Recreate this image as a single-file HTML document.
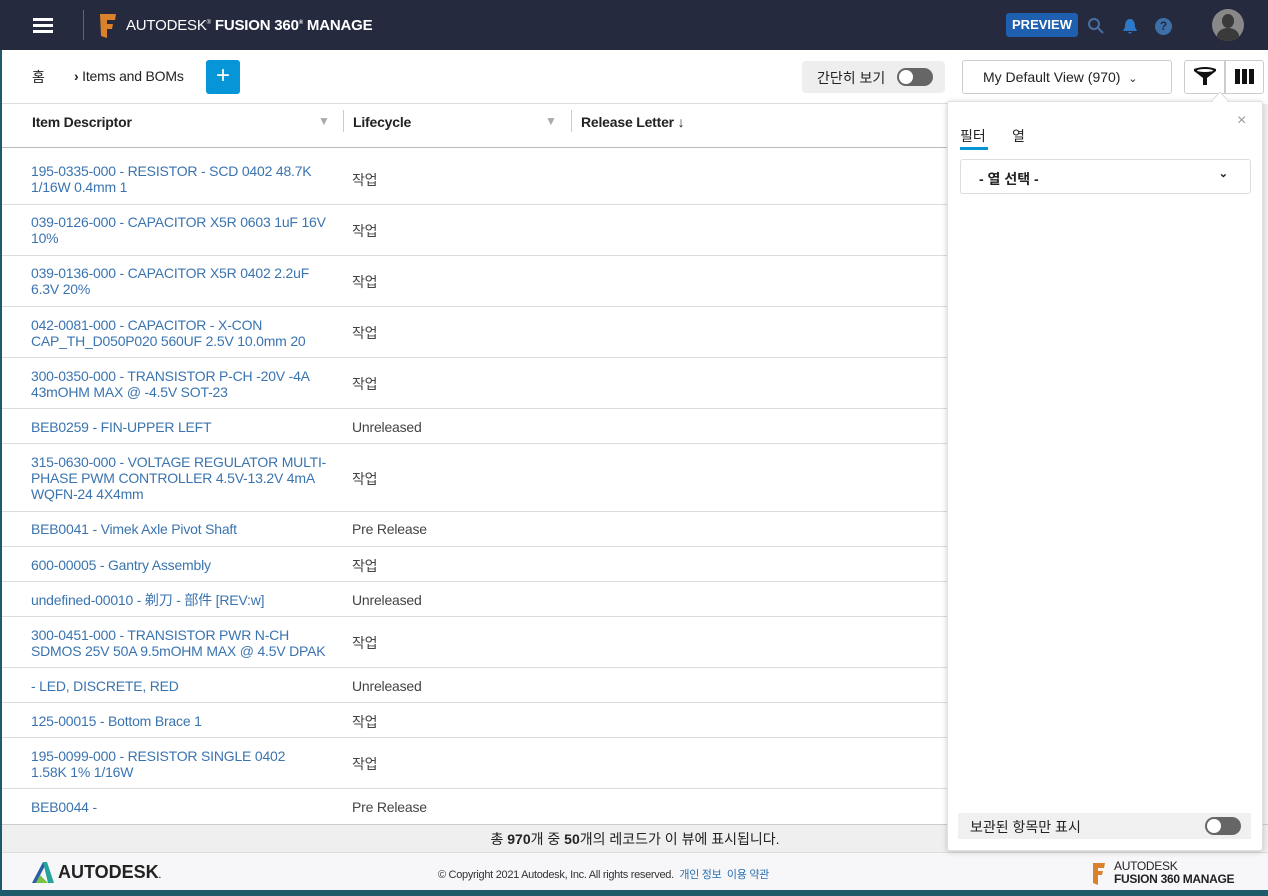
<!DOCTYPE html>
<html><head><meta charset="utf-8"><style>
*{box-sizing:border-box;margin:0;padding:0}
body{width:1268px;height:896px;overflow:hidden;font-family:"Liberation Sans","Noto Sans CJK KR",sans-serif;background:#fff;position:relative;color:#3c3c3c}
.top{position:absolute;left:0;top:0;width:1268px;height:50px;background:#252a3f}
.abs{position:absolute}
.row{position:absolute;left:2px;width:945px;border-bottom:1px solid #dcdcdc;font-size:14px;letter-spacing:-.2px}
.row .a{position:absolute;left:29px;width:302px;color:#3a74b0;line-height:16px}
.row .b{position:absolute;left:350px;color:#444}
</style></head><body>
<div class="abs" style="left:0;top:0;width:2px;height:896px;background:#1d5a6a"></div>
<div class="top">
 <div class="abs" style="left:33px;top:18px;width:20px;height:3px;background:#fff;box-shadow:0 6px 0 #fff,0 12px 0 #fff"></div>
 <div class="abs" style="left:83px;top:10px;width:1px;height:30px;background:#666"></div>
 <svg class="abs" style="left:99px;top:12px" width="18" height="27"><path d="M1 2 L17 2 L16 8 L8 8 L8 12 L14 12 L13 17 L8 17 L8 26 L2 24 Z" fill="#d9822b"/></svg>
 <div class="abs" style="left:126px;top:17px;color:#fff;font-size:15px;letter-spacing:-.2px">AUTODESK<sup style="font-size:6px">®</sup> <b>FUSION 360<sup style="font-size:6px">®</sup> MANAGE</b></div>
 <div class="abs" style="left:1006px;top:13px;width:72px;height:24px;background:#1f5fb0;border-radius:3px;color:#fff;font-weight:bold;font-size:13px;text-align:center;line-height:24px">PREVIEW</div>
 <svg class="abs" style="left:1087px;top:17px" width="18" height="18"><circle cx="7" cy="7" r="5" stroke="#4a6fa0" stroke-width="2" fill="none"/><path d="M11 11 L16 16" stroke="#4a6fa0" stroke-width="2"/></svg>
 <svg class="abs" style="left:1122px;top:18px" width="16" height="17"><path d="M8 1 C4 1 3 5 3 9 L1 13 L15 13 L13 9 C13 5 12 1 8 1Z M6 14 L10 14 L8 16Z" fill="#2e78c8"/></svg>
 <div class="abs" style="left:1155px;top:18px;width:17px;height:17px;border-radius:50%;background:#3d6fa8;color:#252a3f;font-size:12px;font-weight:bold;text-align:center;line-height:17px">?</div>
 <div class="abs" style="left:1212px;top:9px;width:32px;height:32px;border-radius:50%;background:#888;overflow:hidden"><div class="abs" style="left:10px;top:5px;width:12px;height:14px;border-radius:50%;background:#3a3a3a"></div><div class="abs" style="left:5px;top:19px;width:22px;height:16px;border-radius:50% 50% 0 0;background:#3a3a3a"></div></div>
</div>
<div class="abs" style="left:32px;top:67px;font-size:14px;color:#222">홈</div>
<div class="abs" style="left:74px;top:68px;font-size:14px;color:#222;letter-spacing:-.2px"><b>›</b> Items and BOMs</div>
<div class="abs" style="left:206px;top:60px;width:34px;height:34px;background:#0696d7;border-radius:3px;color:#fff;font-size:24px;text-align:center;line-height:32px">+</div>
<div class="abs" style="left:802px;top:61px;width:143px;height:32px;background:#eeeeee;border-radius:4px;font-size:14px;color:#222;padding:7px 0 0 15px">간단히 보기</div>
<div class="abs" style="left:897px;top:68px;width:36px;height:18px;border-radius:9px;background:#666"><div class="abs" style="left:2px;top:2px;width:14px;height:14px;border-radius:50%;background:#fff"></div></div>
<div class="abs" style="left:962px;top:60px;width:210px;height:34px;border:1px solid #ccc;border-radius:3px;font-size:14px;color:#222;padding:8px 0 0 20px">My Default View (970) &nbsp;<span style="font-size:11px">⌄</span></div>
<div class="abs" style="left:1184px;top:60px;width:41px;height:34px;border:1px solid #ccc;border-radius:3px 0 0 3px"></div>
<svg class="abs" style="left:1193px;top:67px" width="24" height="20"><path d="M1 2 Q12 -2 23 2 L23 4 L14 11 L14 18 L10 18 L10 11 L1 4Z" fill="#111"/><ellipse cx="12" cy="3.5" rx="8" ry="1.5" fill="#fff"/></svg>
<div class="abs" style="left:1225px;top:60px;width:39px;height:34px;border:1px solid #ccc;border-radius:0 3px 3px 0"></div>
<div class="abs" style="left:1235px;top:69px;width:5px;height:15px;background:#111;box-shadow:7px 0 0 #111,14px 0 0 #111"></div>
<div class="abs" style="left:2px;top:103px;width:1260px;height:1px;background:#ddd"></div>
<div class="abs" style="left:2px;top:147px;width:945px;height:1px;background:#bbb"></div>
<div class="abs" style="left:32px;top:114px;font-size:14px;font-weight:bold;color:#222;letter-spacing:-.2px">Item Descriptor</div>
<div class="abs" style="left:318px;top:114px;color:#aaa;font-size:12px">▼</div>
<div class="abs" style="left:343px;top:110px;width:1px;height:22px;background:#ccc"></div>
<div class="abs" style="left:353px;top:114px;font-size:14px;font-weight:bold;color:#222;letter-spacing:-.2px">Lifecycle</div>
<div class="abs" style="left:545px;top:114px;color:#aaa;font-size:12px">▼</div>
<div class="abs" style="left:571px;top:110px;width:1px;height:22px;background:#ccc"></div>
<div class="abs" style="left:581px;top:114px;font-size:14px;font-weight:bold;color:#222;letter-spacing:-.2px">Release Letter ↓</div>

<div class="row" style="top:148px;height:57px"><div class="a" style="top:15px">195-0335-000 - RESISTOR - SCD 0402 48.7K 1/16W 0.4mm 1</div><div class="b" style="top:22px">작업</div></div>
<div class="row" style="top:205px;height:51px"><div class="a" style="top:9px">039-0126-000 - CAPACITOR X5R 0603 1uF 16V 10%</div><div class="b" style="top:16px">작업</div></div>
<div class="row" style="top:256px;height:51px"><div class="a" style="top:9px">039-0136-000 - CAPACITOR X5R 0402 2.2uF 6.3V 20%</div><div class="b" style="top:16px">작업</div></div>
<div class="row" style="top:307px;height:51px"><div class="a" style="top:10px">042-0081-000 - CAPACITOR - X-CON CAP_TH_D050P020 560UF 2.5V 10.0mm 20</div><div class="b" style="top:16px">작업</div></div>
<div class="row" style="top:358px;height:51px"><div class="a" style="top:10px">300-0350-000 - TRANSISTOR P-CH -20V -4A 43mOHM MAX @ -4.5V SOT-23</div><div class="b" style="top:16px">작업</div></div>
<div class="row" style="top:409px;height:35px"><div class="a" style="top:10px">BEB0259 - FIN-UPPER LEFT</div><div class="b" style="top:10px">Unreleased</div></div>
<div class="row" style="top:444px;height:68px"><div class="a" style="top:10px">315-0630-000 - VOLTAGE REGULATOR MULTI-PHASE PWM CONTROLLER 4.5V-13.2V 4mA WQFN-24 4X4mm</div><div class="b" style="top:25px">작업</div></div>
<div class="row" style="top:512px;height:35px"><div class="a" style="top:9px">BEB0041 - Vimek Axle Pivot Shaft</div><div class="b" style="top:9px">Pre Release</div></div>
<div class="row" style="top:547px;height:35px"><div class="a" style="top:10px">600-00005 - Gantry Assembly</div><div class="b" style="top:9px">작업</div></div>
<div class="row" style="top:582px;height:35px"><div class="a" style="top:10px">undefined-00010 - 剃刀 - 部件 [REV:w]</div><div class="b" style="top:10px">Unreleased</div></div>
<div class="row" style="top:617px;height:51px"><div class="a" style="top:10px">300-0451-000 - TRANSISTOR PWR N-CH SDMOS 25V 50A 9.5mOHM MAX @ 4.5V DPAK</div><div class="b" style="top:16px">작업</div></div>
<div class="row" style="top:668px;height:35px"><div class="a" style="top:10px">- LED, DISCRETE, RED</div><div class="b" style="top:10px">Unreleased</div></div>
<div class="row" style="top:703px;height:35px"><div class="a" style="top:10px">125-00015 - Bottom Brace 1</div><div class="b" style="top:9px">작업</div></div>
<div class="row" style="top:738px;height:51px"><div class="a" style="top:10px">195-0099-000 - RESISTOR SINGLE 0402<br>1.58K 1% 1/16W</div><div class="b" style="top:16px">작업</div></div>
<div class="row" style="top:789px;height:35px;border-bottom:none"><div class="a" style="top:10px">BEB0044 -</div><div class="b" style="top:10px">Pre Release</div></div>

<div class="abs" style="left:2px;top:824px;width:1266px;height:29px;background:#efefef;border-top:1px solid #ccc;border-bottom:1px solid #ddd;font-size:14px;color:#222;text-align:center;line-height:28px">총 <b>970</b>개 중 <b>50</b>개의 레코드가 이 뷰에 표시됩니다.</div>
<div class="abs" style="left:2px;top:853px;width:1266px;height:37px;background:#f7f7f9"></div>
<svg class="abs" style="left:31px;top:861px" width="24" height="23"><path d="M1 22 L12 1 L16 1 L5 22Z" fill="#2b5ea8"/><path d="M12 1 L16 1 L23 22 L17 22Z" fill="#26a39a"/><path d="M5 22 L9 14 L17 22Z" fill="#7bc142"/></svg>
<div class="abs" style="left:58px;top:862px;font-size:18px;font-weight:bold;color:#222;letter-spacing:0">AUTODESK<span style="font-size:8px">.</span></div>
<div class="abs" style="left:438px;top:866px;font-size:11px;color:#333;letter-spacing:-.3px">© Copyright 2021 Autodesk, Inc. All rights reserved. &nbsp;<span style="color:#2a6fb0">개인 정보 &nbsp;이용 약관</span></div>
<svg class="abs" style="left:1092px;top:862px" width="14" height="24"><path d="M1 1 L13 1 L12 6 L6 6 L6 9 L11 9 L10 13 L6 13 L6 23 L1 21Z" fill="#d9822b"/></svg>
<div class="abs" style="left:1114px;top:860px;font-size:12px;color:#222;line-height:13px;letter-spacing:-.3px">AUTODESK<br><b>FUSION 360 MANAGE</b></div>
<div class="abs" style="left:0;top:890px;width:1268px;height:6px;background:#1d5a6a"></div>
<div class="abs" style="left:1262px;top:104px;width:6px;height:720px;background:#f0f0f0"></div>

<div class="abs" style="left:947px;top:101px;width:316px;height:750px;background:#fff;border:1px solid #e0e0e0;border-radius:3px;box-shadow:0 1px 6px rgba(0,0,0,.2)"></div>
<div class="abs" style="left:1214px;top:94px;width:12px;height:12px;background:#fff;transform:rotate(45deg);border-left:1px solid #ddd;border-top:1px solid #ddd"></div>
<div class="abs" style="left:1237px;top:112px;font-size:16px;color:#999">×</div>
<div class="abs" style="left:960px;top:126px;font-size:14px;color:#222">필터</div>
<div class="abs" style="left:960px;top:147px;width:28px;height:3px;background:#0696d7"></div>
<div class="abs" style="left:1012px;top:126px;font-size:14px;color:#222">열</div>
<div class="abs" style="left:960px;top:159px;width:291px;height:35px;border:1px solid #ddd;border-radius:3px;font-size:14px;font-weight:bold;color:#222;padding:9px 0 0 18px">- 열 선택 -<span class="abs" style="right:22px;top:7px;font-size:11px">⌄</span></div>
<div class="abs" style="left:958px;top:813px;width:293px;height:26px;background:#f0f0f0;font-size:14px;color:#222;padding:4px 0 0 12px">보관된 항목만 표시</div>
<div class="abs" style="left:1205px;top:817px;width:36px;height:18px;border-radius:9px;background:#666"><div class="abs" style="left:2px;top:2px;width:14px;height:14px;border-radius:50%;background:#fff"></div></div>
</body></html>
